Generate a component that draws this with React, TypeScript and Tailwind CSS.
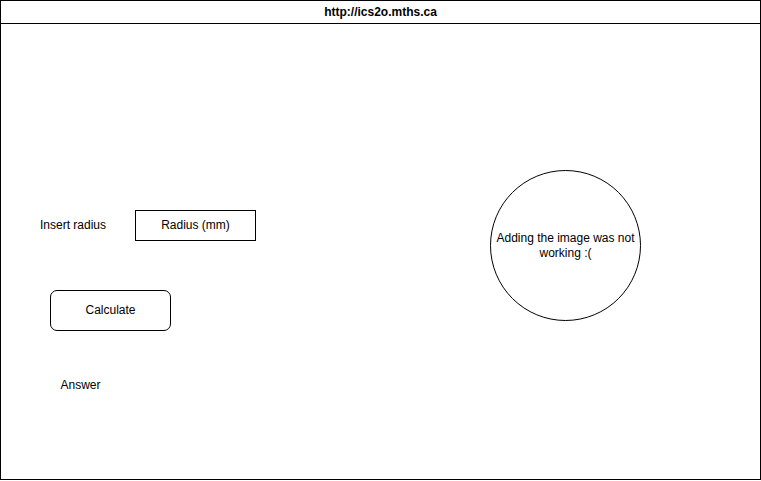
export default function App() {
  return (
    <div className="w-[761px] h-[480px] border border-black bg-white text-black text-[12px] leading-[15px] font-['Liberation_Sans',Arial,sans-serif] flex flex-col">
      <div className="h-[23px] border-b border-black flex items-center justify-center font-bold">
        http://ics2o.mths.ca
      </div>
      <div className="flex">
        <div className="w-[489px] pt-[186px] flex flex-col">
          <div className="flex items-center">
            <span className="ml-[39px] w-[95px]">Insert radius</span>
            <div className="w-[121px] h-[31px] border border-black flex items-center justify-center">
              Radius (mm)
            </div>
          </div>
          <button className="ml-[49px] mt-[49px] w-[121px] h-[41px] border border-black rounded-[7px] flex items-center justify-center">
            Calculate
          </button>
          <div className="ml-[49px] mt-[39px] w-[61px] h-[30px] flex items-center justify-center">
            Answer
          </div>
        </div>
        <div className="mt-[146px] w-[151px] h-[151px] rounded-full border border-black flex items-center justify-center text-center px-[4px]">
          Adding the image was not working :(
        </div>
      </div>
    </div>
  );
}
